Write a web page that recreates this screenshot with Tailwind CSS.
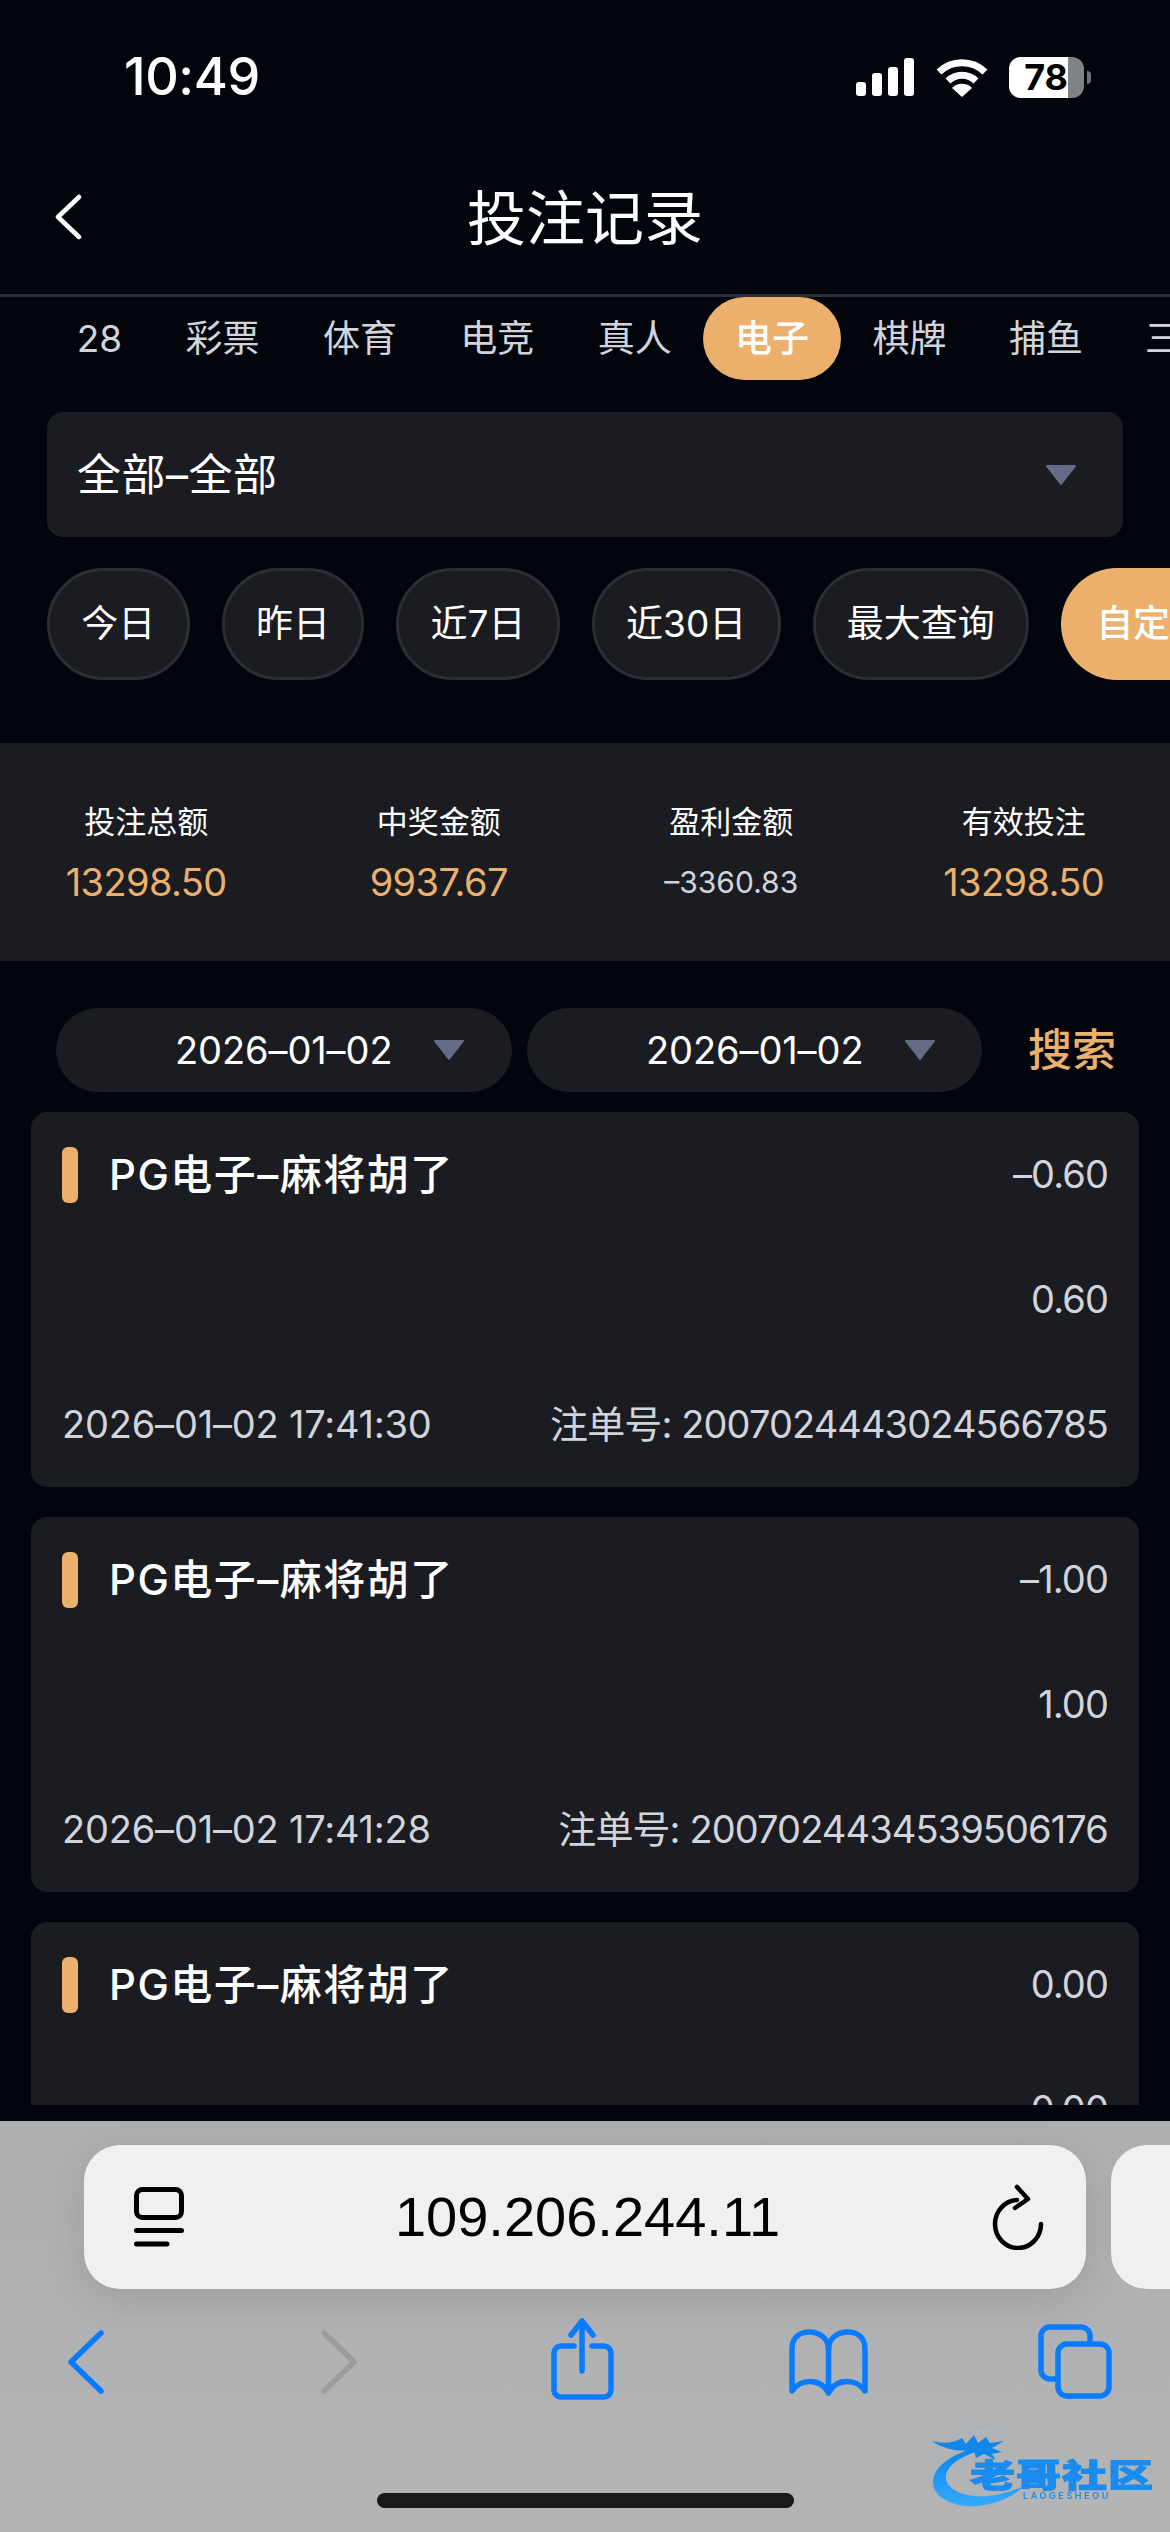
<!DOCTYPE html>
<html lang="zh-CN">
<head>
    <meta charset="UTF-8">
    <meta name="viewport" content="width=device-width, initial-scale=1.0">
    <title>投注记录</title>
    <script src="https://cdn.jsdelivr.net/npm/@tailwindcss/browser@4"></script>
</head>
<body class="relative w-[1170px] h-[2532px] overflow-hidden bg-[#02060c] text-white font-['Inter','Noto_Sans_CJK_SC',sans-serif]">
    <!-- Page area -->
    <div class="h-[2121px] flex flex-col overflow-hidden">
        <!-- Status bar -->
        <div class="h-[154px] shrink-0 flex items-center justify-between pl-[124px] pr-[79px]">
            <span class="text-[52px] font-medium tracking-[-0.4px]">10:49</span>
            <div class="flex items-center">
                <svg width="58" height="38" viewBox="0 0 58 38" fill="#fff">
                    <rect x="0" y="24" width="10" height="14" rx="3"/>
                    <rect x="16" y="15" width="10" height="23" rx="3"/>
                    <rect x="32" y="9" width="10" height="29" rx="3"/>
                    <rect x="48" y="0" width="10" height="38" rx="3"/>
                </svg>
                <svg class="ml-[22px]" width="52" height="40" viewBox="0 0 52 40" fill="none" stroke="#fff" stroke-width="7">
                    <path d="M3 15 A33 33 0 0 1 49 15"/>
                    <path d="M12 24 A20 20 0 0 1 40 24"/>
                    <path d="M16 31 A14 14 0 0 1 36 31 L26 40 Z" fill="#fff" stroke="none"/>
                </svg>
                <div class="ml-[21px] w-[75px] h-[41px] rounded-[12px] overflow-hidden bg-[#808285] flex">
                    <div class="w-[59px] h-full bg-white flex items-center justify-end text-black text-[36px] font-bold leading-none">78</div>
                </div>
                <div class="ml-[3px] w-[4px] h-[13px] rounded-r-full bg-[#6d6f72]"></div>
            </div>
        </div>

        <!-- Title bar -->
        <div class="h-[140px] shrink-0 flex items-center justify-center relative pb-[12px]">
            <svg class="absolute left-[54px] top-[40px]" width="28" height="46" viewBox="0 0 28 46" fill="none" stroke="#fff" stroke-width="4.5" stroke-linecap="round" stroke-linejoin="round">
                <path d="M25 3 L4 23 L25 43"/>
            </svg>
            <h1 class="text-[59px] font-normal leading-none">投注记录</h1>
        </div>
        <div class="h-[3px] shrink-0 bg-[#2d2f35]"></div>

        <!-- Category tabs -->
        <div class="h-[83px] shrink-0 flex pl-[45px] text-[37px] text-[#d2d4dc] whitespace-nowrap overflow-hidden">
            <div class="px-[31.7px] flex items-center shrink-0">28</div>
            <div class="px-[31.7px] flex items-center shrink-0">彩票</div>
            <div class="px-[31.7px] flex items-center shrink-0">体育</div>
            <div class="px-[31.7px] flex items-center shrink-0">电竞</div>
            <div class="px-[31.7px] flex items-center shrink-0">真人</div>
            <div class="px-[31.7px] flex items-center shrink-0 rounded-full bg-[#eab06c] text-white font-medium">电子</div>
            <div class="px-[31.7px] flex items-center shrink-0">棋牌</div>
            <div class="px-[31px] flex items-center shrink-0">捕鱼</div>
            <div class="px-[31px] flex items-center shrink-0">三方</div>
        </div>

        <!-- Game select -->
        <div class="mt-[32px] mx-[47px] h-[125px] shrink-0 rounded-[16px] bg-[#1a1c21] flex items-center justify-between pl-[30px] pr-[46px]">
            <span class="text-[44px] tracking-[0.5px]">全部–全部</span>
            <svg width="32" height="20" viewBox="0 0 32 20" fill="#666c86" stroke="#666c86" stroke-width="2" stroke-linejoin="round"><path d="M2 1 H30 L16 19 Z"/></svg>
        </div>

        <!-- Quick date filters -->
        <div class="mt-[31px] h-[112px] shrink-0 flex gap-[32px] pl-[47px] text-[37px] whitespace-nowrap overflow-hidden">
            <div class="px-[31.3px] flex items-center shrink-0 rounded-full bg-[#1a1c21] border-[3px] border-[#2c2e34]">今日</div>
            <div class="px-[31.3px] flex items-center shrink-0 rounded-full bg-[#1a1c21] border-[3px] border-[#2c2e34]">昨日</div>
            <div class="px-[31.3px] flex items-center shrink-0 rounded-full bg-[#1a1c21] border-[3px] border-[#2c2e34]">近7日</div>
            <div class="px-[31.3px] flex items-center shrink-0 rounded-full bg-[#1a1c21] border-[3px] border-[#2c2e34]">近30日</div>
            <div class="px-[31.3px] flex items-center shrink-0 rounded-full bg-[#1a1c21] border-[3px] border-[#2c2e34]">最大查询</div>
            <div class="px-[35px] flex items-center shrink-0 rounded-full bg-[#eab06c] font-medium">自定义</div>
        </div>

        <!-- Totals -->
        <div class="mt-[63px] h-[218px] shrink-0 bg-[#1a1c21] grid grid-cols-4 items-center text-center">
            <div class="flex flex-col gap-[18px]"><span class="text-[31px] leading-[42px]">投注总额</span><span class="text-[38px] tracking-[-0.6px] leading-[42px] text-[#eab06c]">13298.50</span></div>
            <div class="flex flex-col gap-[18px]"><span class="text-[31px] leading-[42px]">中奖金额</span><span class="text-[38px] tracking-[-0.6px] leading-[42px] text-[#eab06c]">9937.67</span></div>
            <div class="flex flex-col gap-[18px]"><span class="text-[31px] leading-[42px]">盈利金额</span><span class="text-[30px] leading-[42px] text-[#d2d4dc]">–3360.83</span></div>
            <div class="flex flex-col gap-[18px]"><span class="text-[31px] leading-[42px]">有效投注</span><span class="text-[38px] tracking-[-0.6px] leading-[42px] text-[#eab06c]">13298.50</span></div>
        </div>

        <!-- Date range -->
        <div class="mt-[47px] h-[84px] shrink-0 flex items-center pl-[56px]">
            <div class="w-[456px] h-full rounded-full bg-[#1a1c21] flex items-center pl-[119px] text-[38px] tracking-[-0.1px]">
                <span class="w-[258px]">2026–01–02</span>
                <svg width="32" height="20" viewBox="0 0 32 20" fill="#666c86" stroke="#666c86" stroke-width="2" stroke-linejoin="round"><path d="M2 1 H30 L16 19 Z"/></svg>
            </div>
            <div class="ml-[15px] w-[455px] h-full rounded-full bg-[#1a1c21] flex items-center pl-[119px] text-[38px] tracking-[-0.1px]">
                <span class="w-[258px]">2026–01–02</span>
                <svg width="32" height="20" viewBox="0 0 32 20" fill="#666c86" stroke="#666c86" stroke-width="2" stroke-linejoin="round"><path d="M2 1 H30 L16 19 Z"/></svg>
            </div>
            <span class="ml-[46px] text-[44px] font-medium text-[#eab06c]">搜索</span>
        </div>

        <!-- Records -->
        <div class="mt-[20px] mx-[31px] h-[993px] shrink-0 overflow-hidden flex flex-col gap-[30px]">
            <div class="h-[375px] shrink-0 rounded-[16px] bg-[#1a1c21] px-[31px] grid grid-rows-3">
                <div class="flex items-center justify-between">
                    <div class="flex items-center gap-[31px]"><span class="w-[16px] h-[56px] rounded-[6px] bg-[#eab06c]"></span><span class="text-[42px] font-medium tracking-[1.5px]">PG电子–麻将胡了</span></div>
                    <span class="text-[38px] tracking-[-0.9px] text-[#d2d4dc]">–0.60</span>
                </div>
                <div class="flex items-center justify-end text-[38px] tracking-[-0.9px] text-[#d2d4dc]">0.60</div>
                <div class="flex items-center justify-between text-[38px] text-[#d2d4dc] whitespace-nowrap">
                    <span class="tracking-[-0.2px]">2026–01–02 17:41:30</span><span class="tracking-[-0.9px]">注单号: 2007024443024566785</span>
                </div>
            </div>
            <div class="h-[375px] shrink-0 rounded-[16px] bg-[#1a1c21] px-[31px] grid grid-rows-3">
                <div class="flex items-center justify-between">
                    <div class="flex items-center gap-[31px]"><span class="w-[16px] h-[56px] rounded-[6px] bg-[#eab06c]"></span><span class="text-[42px] font-medium tracking-[1.5px]">PG电子–麻将胡了</span></div>
                    <span class="text-[38px] tracking-[-0.9px] text-[#d2d4dc]">–1.00</span>
                </div>
                <div class="flex items-center justify-end text-[38px] tracking-[-0.9px] text-[#d2d4dc]">1.00</div>
                <div class="flex items-center justify-between text-[38px] text-[#d2d4dc] whitespace-nowrap">
                    <span class="tracking-[-0.2px]">2026–01–02 17:41:28</span><span class="tracking-[-0.9px]">注单号: 2007024434539506176</span>
                </div>
            </div>
            <div class="h-[375px] shrink-0 rounded-[16px] bg-[#1a1c21] px-[31px] grid grid-rows-3">
                <div class="flex items-center justify-between">
                    <div class="flex items-center gap-[31px]"><span class="w-[16px] h-[56px] rounded-[6px] bg-[#eab06c]"></span><span class="text-[42px] font-medium tracking-[1.5px]">PG电子–麻将胡了</span></div>
                    <span class="text-[38px] tracking-[-0.9px] text-[#d2d4dc]">0.00</span>
                </div>
                <div class="flex items-center justify-end text-[38px] tracking-[-0.9px] text-[#d2d4dc]">0.00</div>
            </div>
        </div>
    </div>

    <!-- Browser toolbar -->
    <div class="h-[411px] bg-linear-to-b from-[#adaeb0] to-[#b3b4b6] pt-[24px] overflow-hidden">
        <div class="flex gap-[25px] pl-[84px] h-[144px]">
            <div class="w-[1002px] shrink-0 h-full rounded-[36px] bg-[#f0f0f0] shadow-[0_12px_40px_rgba(0,0,0,0.1)] flex items-center justify-between pl-[50px] pr-[41px] text-black">
                <svg width="50" height="60" viewBox="0 0 50 60" fill="none" stroke="#000" stroke-width="5" stroke-linecap="round">
                    <rect x="2.5" y="2.5" width="45" height="28" rx="6"/>
                    <path d="M2.5 43.5 H47.5"/>
                    <path d="M2.5 57 H33"/>
                </svg>
                <span class="text-[56px] font-['Liberation_Sans',sans-serif] leading-none">109.206.244.11</span>
                <svg width="54" height="66" viewBox="0 0 54 66" fill="none" stroke="#000" stroke-width="4.5" stroke-linecap="round" stroke-linejoin="round">
                    <path d="M26 16 A23 24 0 1 0 50 40"/>
                    <path d="M26 3 L37 15 L24 24"/>
                </svg>
            </div>
            <div class="w-[300px] shrink-0 h-full rounded-[36px] bg-[#f0f0f0]"></div>
        </div>

        <div class="mt-[26px] ml-[-39px] flex">
            <div class="w-[248px] shrink-0 flex justify-center">
                <svg width="100" height="90" viewBox="0 0 100 90" fill="none" stroke="#0a7aff" stroke-width="5.5" stroke-linecap="round" stroke-linejoin="round"><path d="M66 18 L36 47 L66 76"/></svg>
            </div>
            <div class="w-[248px] shrink-0 flex justify-center">
                <svg width="100" height="90" viewBox="0 0 100 90" fill="none" stroke="#9b9c9e" stroke-width="5.5" stroke-linecap="round" stroke-linejoin="round"><path d="M41 18 L71 47 L41 76"/></svg>
            </div>
            <div class="w-[248px] shrink-0 flex justify-center">
                <svg width="100" height="90" viewBox="0 0 100 90" fill="none" stroke="#0a7aff" stroke-width="5.5" stroke-linecap="round" stroke-linejoin="round">
                    <path d="M43 31 H30 a7 7 0 0 0 -7 7 V75 a7 7 0 0 0 7 7 H73 a7 7 0 0 0 7 -7 V38 a7 7 0 0 0 -7 -7 H61"/>
                    <path d="M51 56 V7"/>
                    <path d="M40 20 L51 6 L62 20"/>
                </svg>
            </div>
            <div class="w-[248px] shrink-0 flex justify-center">
                <svg width="100" height="90" viewBox="0 0 100 90" fill="none" stroke="#0a7aff" stroke-width="5.5" stroke-linecap="round" stroke-linejoin="round">
                    <path d="M49.5 32 V72"/>
                    <path d="M13 76 V34 C13 22 21 17 30 17 C40 17 49.5 23 49.5 34 C49.5 23 59 17 69 17 C78 17 86 22 86 34 V76 C78 64 58 62 49.5 78 C41 62 21 64 13 76 Z"/>
                </svg>
            </div>
            <div class="w-[248px] shrink-0 flex justify-center">
                <svg width="100" height="90" viewBox="0 0 100 90" fill="none" stroke="#0a7aff" stroke-width="5.5" stroke-linecap="round" stroke-linejoin="round">
                    <path d="M63 27 V21 a9 9 0 0 0 -9 -9 H23 a9 9 0 0 0 -9 9 V55 a9 9 0 0 0 9 9 H30"/>
                    <rect x="31" y="29" width="51" height="52" rx="9"/>
                </svg>
            </div>
        </div>
    </div>

    <!-- Home indicator -->
    <div class="absolute left-[377px] top-[2493px] w-[417px] h-[15px] rounded-full bg-[#191919]"></div>

    <!-- Watermark -->
    <div class="absolute left-[930px] top-[2430px] w-[228px] h-[80px] blur-[0.7px]">
        <svg class="absolute left-0 top-0" width="110" height="80" viewBox="0 0 110 80">
            <defs>
                <linearGradient id="wm" x1="0" y1="0" x2="0" y2="1">
                    <stop offset="0" stop-color="#0a84ee"/>
                    <stop offset="1" stop-color="#35aaff"/>
                </linearGradient>
            </defs>
            <path d="M46 18 C20 24 3 38 3 52 C3 68 24 78 48 76 C68 74 84 66 94 56 C80 62 62 68 44 66 C26 64 15 56 16 46 C17 36 30 26 52 20 Z" fill="url(#wm)"/>
            <path d="M2 11 C14 14 24 13 32 8 L36 14 L44 5 L48 13 L56 7 L60 13 L74 11 L62 18 L72 22 L62 24 L66 30 L54 24 L46 28 L44 20 C32 22 14 20 2 11 Z" fill="#1287ea"/>
            <path d="M44 2 C56 -1 70 1 72 6" fill="none" stroke="#9cc4e4" stroke-width="1"/>
        </svg>
        <span class="absolute left-[40px] top-[29px] text-[45px] leading-[32px] tracking-[1px] font-black whitespace-nowrap scale-y-[0.72] [-webkit-text-stroke:1.5px_#1a8cf0] text-[#1a8cf0]">老哥社区</span>
        <span class="absolute left-[93px] top-[61px] text-[9px] leading-[10px] font-semibold tracking-[2.6px] whitespace-nowrap text-[#1a8cec]">LAOGESHEOU</span>
    </div>
</body>
</html>
